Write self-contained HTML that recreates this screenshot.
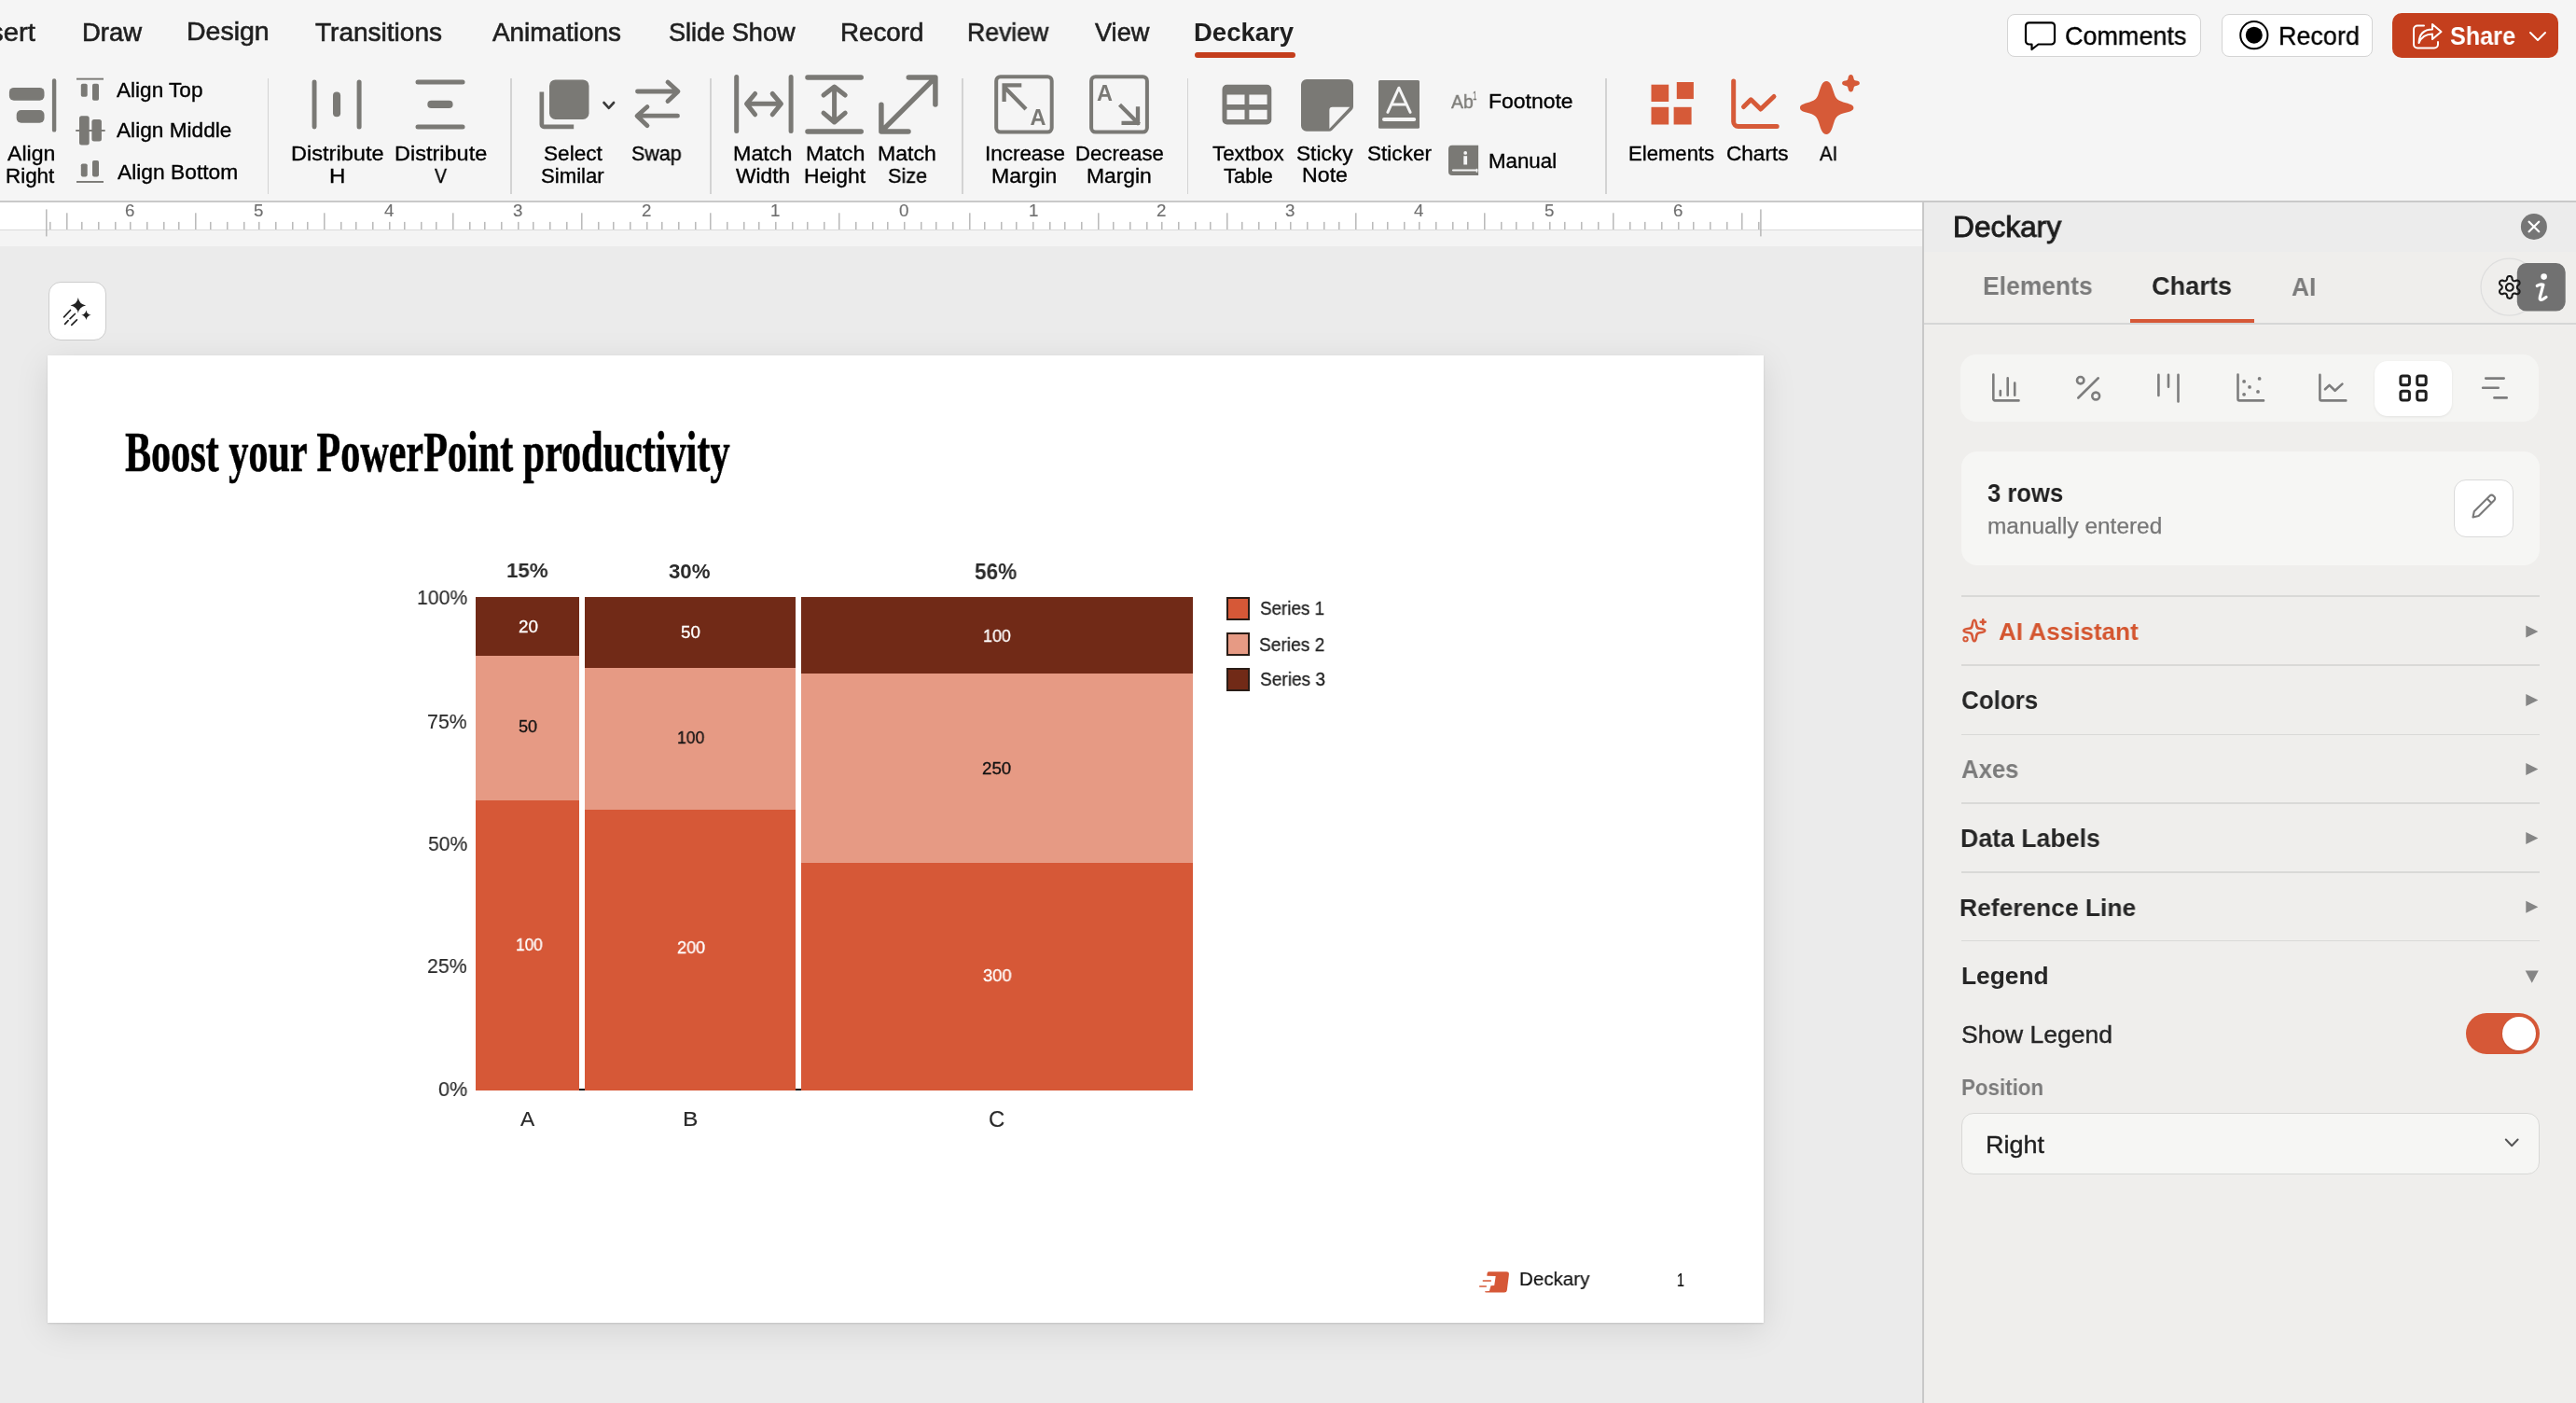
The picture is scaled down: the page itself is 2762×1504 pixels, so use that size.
<!DOCTYPE html>
<html><head><meta charset="utf-8"><style>
html,body{margin:0;padding:0;}
body{width:2762px;height:1504px;position:relative;overflow:hidden;background:#f5f5f5;font-family:"Liberation Sans",sans-serif;}
.r{position:absolute;}
.t{position:absolute;line-height:1;white-space:pre;transform-origin:0 0;will-change:transform;}
.s{position:absolute;overflow:visible;}
</style></head><body>
<div class="r" style="left:0px;top:0px;width:2762px;height:215px;background:#f5f5f5;"></div>
<div class="r" style="left:0px;top:215px;width:2762px;height:1.5px;background:#c9c9c9;"></div>
<div class="r" style="left:0px;top:216.5px;width:2061px;height:48px;background:#f4f4f4;"></div>
<div class="r" style="left:0px;top:216.5px;width:2061px;height:30px;background:#ffffff;"></div>
<div class="r" style="left:0px;top:246px;width:2061px;height:1.3px;background:#dadada;"></div>
<div class="r" style="left:0px;top:264px;width:2061px;height:1240px;background:#ebebeb;"></div>
<div class="r" style="left:2061px;top:216.5px;width:701px;height:1287.5px;background:#efeeec;"></div>
<div class="r" style="left:2061px;top:216.5px;width:1.6px;height:1287.5px;background:#c8c8c8;"></div>
<div class="t" style="left:87.73px;top:22.04px;font-size:26.91px;font-family:'Liberation Sans',sans-serif;font-weight:400;color:#1f1f1f;transform:scaleX(1.0218);-webkit-text-stroke:0.6px #1f1f1f;">Draw</div>
<div class="t" style="left:199.85px;top:21.21px;font-size:26.91px;font-family:'Liberation Sans',sans-serif;font-weight:400;color:#1f1f1f;transform:scaleX(1.0591);-webkit-text-stroke:0.6px #1f1f1f;">Design</div>
<div class="t" style="left:338.35px;top:22.03px;font-size:26.91px;font-family:'Liberation Sans',sans-serif;font-weight:400;color:#1f1f1f;transform:scaleX(1.0416);-webkit-text-stroke:0.6px #1f1f1f;">Transitions</div>
<div class="t" style="left:528.49px;top:22.03px;font-size:26.91px;font-family:'Liberation Sans',sans-serif;font-weight:400;color:#1f1f1f;transform:scaleX(1.0369);-webkit-text-stroke:0.6px #1f1f1f;">Animations</div>
<div class="t" style="left:717.30px;top:22.03px;font-size:26.91px;font-family:'Liberation Sans',sans-serif;font-weight:400;color:#1f1f1f;transform:scaleX(1.0070);-webkit-text-stroke:0.6px #1f1f1f;">Slide Show</div>
<div class="t" style="left:901.13px;top:22.03px;font-size:26.91px;font-family:'Liberation Sans',sans-serif;font-weight:400;color:#1f1f1f;transform:scaleX(1.0312);-webkit-text-stroke:0.6px #1f1f1f;">Record</div>
<div class="t" style="left:1036.86px;top:22.03px;font-size:26.91px;font-family:'Liberation Sans',sans-serif;font-weight:400;color:#1f1f1f;transform:scaleX(0.9894);-webkit-text-stroke:0.6px #1f1f1f;">Review</div>
<div class="t" style="left:1173.92px;top:22.03px;font-size:26.91px;font-family:'Liberation Sans',sans-serif;font-weight:400;color:#1f1f1f;transform:scaleX(1.0089);-webkit-text-stroke:0.6px #1f1f1f;">View</div>
<div class="t" style="left:-10.81px;top:20.56px;font-size:27.93px;font-family:'Liberation Sans',sans-serif;font-weight:400;color:#1f1f1f;transform:scaleX(1.0528);-webkit-text-stroke:0.6px #1f1f1f;">sert</div>
<div class="t" style="left:1280.36px;top:20.78px;font-size:27.20px;font-family:'Liberation Sans',sans-serif;font-weight:700;color:#1f1f1f;transform:scaleX(1.0122);">Deckary</div>
<div class="r" style="left:1281px;top:55.8px;width:108px;height:6px;background:#c43e1c;border-radius:3px;"></div>
<div class="r" style="left:2151.6px;top:14.6px;width:208.5px;height:46.5px;background:#ffffff;border:1.5px solid #d4d4d4;border-radius:8px;box-sizing:border-box;"></div>
<svg class="s" style="left:2168px;top:21px" width="40" height="36" viewBox="0 0 40 36"><path d="M7.5 3.3 H31.5 a3.5 3.5 0 0 1 3.5 3.5 V23 a3.5 3.5 0 0 1 -3.5 3.5 H17.5 L10.5 32 V26.5 H7.5 a3.5 3.5 0 0 1 -3.5 -3.5 V6.8 a3.5 3.5 0 0 1 3.5 -3.5 Z" fill="none" stroke="#000" stroke-width="2.2" stroke-linejoin="round"/></svg>
<div class="t" style="left:2213.71px;top:26.16px;font-size:27.05px;font-family:'Liberation Sans',sans-serif;font-weight:400;color:#000;transform:scaleX(0.9968);-webkit-text-stroke:0.35px #000;">Comments</div>
<div class="r" style="left:2382.2px;top:14.5px;width:162px;height:46.4px;background:#ffffff;border:1.5px solid #d4d4d4;border-radius:8px;box-sizing:border-box;"></div>
<svg class="s" style="left:2396px;top:17px" width="42" height="42" viewBox="0 0 42 42"><circle cx="20.8" cy="20.7" r="14.6" fill="none" stroke="#000" stroke-width="2"/><circle cx="20.8" cy="20.7" r="9" fill="#000"/></svg>
<div class="t" style="left:2442.90px;top:26.35px;font-size:27.05px;font-family:'Liberation Sans',sans-serif;font-weight:400;color:#000;transform:scaleX(0.9957);-webkit-text-stroke:0.35px #000;">Record</div>
<div class="r" style="left:2565.1px;top:13.7px;width:177.8px;height:47.9px;background:#c43f1d;border-radius:10px;"></div>
<svg class="s" style="left:2582px;top:17px" width="42" height="40" viewBox="0 0 42 40"><path d="M17 10.5 H10 a4 4 0 0 0 -4 4 V30.5 a4 4 0 0 0 4 4 H28 a4 4 0 0 0 4 -4 V28" fill="none" stroke="#fff" stroke-width="2" stroke-linecap="round"/><path d="M11.5 29 C12 19 17.5 14.5 26 14.5 V9 L35.5 17 L26 25 V19.5 C19.5 19.5 14.5 22 11.5 29 Z" fill="none" stroke="#fff" stroke-width="2" stroke-linejoin="round"/></svg>
<div class="t" style="left:2626.92px;top:26.35px;font-size:27.05px;font-family:'Liberation Sans',sans-serif;font-weight:700;color:#fff;transform:scaleX(0.9312);">Share</div>
<svg class="s" style="left:2710px;top:32px" width="22" height="16" viewBox="0 0 22 16"><path d="M3 3 L11 11 L19 3" fill="none" stroke="#fff" stroke-width="2" stroke-linecap="round" stroke-linejoin="round"/></svg>
<div class="t" style="left:8.04px;top:154.01px;font-size:22.11px;font-family:'Liberation Sans',sans-serif;font-weight:400;color:#000;transform:scaleX(1.0431);-webkit-text-stroke:0.35px #000;">Align</div>
<div class="t" style="left:6.17px;top:177.67px;font-size:22.11px;font-family:'Liberation Sans',sans-serif;font-weight:400;color:#000;transform:scaleX(1.0134);-webkit-text-stroke:0.35px #000;">Right</div>
<div class="t" style="left:312.04px;top:153.98px;font-size:22.11px;font-family:'Liberation Sans',sans-serif;font-weight:400;color:#000;transform:scaleX(1.0663);-webkit-text-stroke:0.35px #000;">Distribute</div>
<div class="t" style="left:352.98px;top:177.96px;font-size:22.11px;font-family:'Liberation Sans',sans-serif;font-weight:400;color:#000;transform:scaleX(1.0871);-webkit-text-stroke:0.35px #000;">H</div>
<div class="t" style="left:423.08px;top:153.98px;font-size:22.11px;font-family:'Liberation Sans',sans-serif;font-weight:400;color:#000;transform:scaleX(1.0630);-webkit-text-stroke:0.35px #000;">Distribute</div>
<div class="t" style="left:466.22px;top:177.96px;font-size:22.11px;font-family:'Liberation Sans',sans-serif;font-weight:400;color:#000;transform:scaleX(0.8805);-webkit-text-stroke:0.35px #000;">V</div>
<div class="t" style="left:582.74px;top:153.98px;font-size:22.11px;font-family:'Liberation Sans',sans-serif;font-weight:400;color:#000;transform:scaleX(1.0232);-webkit-text-stroke:0.35px #000;">Select</div>
<div class="t" style="left:580.28px;top:177.64px;font-size:22.11px;font-family:'Liberation Sans',sans-serif;font-weight:400;color:#000;transform:scaleX(1.0028);-webkit-text-stroke:0.35px #000;">Similar</div>
<div class="t" style="left:677.13px;top:153.54px;font-size:22.11px;font-family:'Liberation Sans',sans-serif;font-weight:400;color:#000;transform:scaleX(0.9702);-webkit-text-stroke:0.35px #000;">Swap</div>
<div class="t" style="left:786.08px;top:153.98px;font-size:22.11px;font-family:'Liberation Sans',sans-serif;font-weight:400;color:#000;transform:scaleX(1.0539);-webkit-text-stroke:0.35px #000;">Match</div>
<div class="t" style="left:789.41px;top:177.64px;font-size:22.11px;font-family:'Liberation Sans',sans-serif;font-weight:400;color:#000;transform:scaleX(1.0284);-webkit-text-stroke:0.35px #000;">Width</div>
<div class="t" style="left:864.08px;top:153.98px;font-size:22.11px;font-family:'Liberation Sans',sans-serif;font-weight:400;color:#000;transform:scaleX(1.0539);-webkit-text-stroke:0.35px #000;">Match</div>
<div class="t" style="left:862.45px;top:177.67px;font-size:22.11px;font-family:'Liberation Sans',sans-serif;font-weight:400;color:#000;transform:scaleX(1.0354);-webkit-text-stroke:0.35px #000;">Height</div>
<div class="t" style="left:941.28px;top:153.98px;font-size:22.11px;font-family:'Liberation Sans',sans-serif;font-weight:400;color:#000;transform:scaleX(1.0434);-webkit-text-stroke:0.35px #000;">Match</div>
<div class="t" style="left:951.59px;top:177.64px;font-size:22.11px;font-family:'Liberation Sans',sans-serif;font-weight:400;color:#000;transform:scaleX(0.9789);-webkit-text-stroke:0.35px #000;">Size</div>
<div class="t" style="left:1055.61px;top:153.77px;font-size:22.11px;font-family:'Liberation Sans',sans-serif;font-weight:400;color:#000;transform:scaleX(1.0146);-webkit-text-stroke:0.35px #000;">Increase</div>
<div class="t" style="left:1063.10px;top:177.67px;font-size:22.11px;font-family:'Liberation Sans',sans-serif;font-weight:400;color:#000;transform:scaleX(1.0423);-webkit-text-stroke:0.35px #000;">Margin</div>
<div class="t" style="left:1153.39px;top:153.77px;font-size:22.11px;font-family:'Liberation Sans',sans-serif;font-weight:400;color:#000;transform:scaleX(1.0021);-webkit-text-stroke:0.35px #000;">Decrease</div>
<div class="t" style="left:1165.30px;top:177.67px;font-size:22.11px;font-family:'Liberation Sans',sans-serif;font-weight:400;color:#000;transform:scaleX(1.0329);-webkit-text-stroke:0.35px #000;">Margin</div>
<div class="t" style="left:1299.50px;top:153.98px;font-size:22.11px;font-family:'Liberation Sans',sans-serif;font-weight:400;color:#000;transform:scaleX(1.0073);-webkit-text-stroke:0.35px #000;">Textbox</div>
<div class="t" style="left:1312.14px;top:177.64px;font-size:22.11px;font-family:'Liberation Sans',sans-serif;font-weight:400;color:#000;-webkit-text-stroke:0.35px #000;">Table</div>
<div class="t" style="left:1389.94px;top:154.01px;font-size:22.11px;font-family:'Liberation Sans',sans-serif;font-weight:400;color:#000;transform:scaleX(1.0254);-webkit-text-stroke:0.35px #000;">Sticky</div>
<div class="t" style="left:1395.53px;top:177.43px;font-size:22.11px;font-family:'Liberation Sans',sans-serif;font-weight:400;color:#000;transform:scaleX(1.0482);-webkit-text-stroke:0.35px #000;">Note</div>
<div class="t" style="left:1465.96px;top:153.98px;font-size:22.11px;font-family:'Liberation Sans',sans-serif;font-weight:400;color:#000;transform:scaleX(1.0209);-webkit-text-stroke:0.35px #000;">Sticker</div>
<div class="t" style="left:1745.89px;top:153.98px;font-size:22.11px;font-family:'Liberation Sans',sans-serif;font-weight:400;color:#000;-webkit-text-stroke:0.35px #000;">Elements</div>
<div class="t" style="left:1851.41px;top:153.98px;font-size:22.11px;font-family:'Liberation Sans',sans-serif;font-weight:400;color:#000;transform:scaleX(1.0216);-webkit-text-stroke:0.35px #000;">Charts</div>
<div class="t" style="left:1950.81px;top:153.50px;font-size:22.11px;font-family:'Liberation Sans',sans-serif;font-weight:400;color:#000;transform:scaleX(0.9259);-webkit-text-stroke:0.35px #000;">AI</div>
<div class="t" style="left:125.24px;top:85.93px;font-size:22.40px;font-family:'Liberation Sans',sans-serif;font-weight:400;color:#000;transform:scaleX(1.0080);-webkit-text-stroke:0.35px #000;">Align Top</div>
<div class="t" style="left:125.24px;top:129.25px;font-size:22.40px;font-family:'Liberation Sans',sans-serif;font-weight:400;color:#000;transform:scaleX(1.0123);-webkit-text-stroke:0.35px #000;">Align Middle</div>
<div class="t" style="left:125.60px;top:173.71px;font-size:22.40px;font-family:'Liberation Sans',sans-serif;font-weight:400;color:#000;transform:scaleX(1.0184);-webkit-text-stroke:0.35px #000;">Align Bottom</div>
<div class="t" style="left:1595.53px;top:98.13px;font-size:21.82px;font-family:'Liberation Sans',sans-serif;font-weight:400;color:#000;transform:scaleX(1.0528);-webkit-text-stroke:0.35px #000;">Footnote</div>
<div class="t" style="left:1595.58px;top:162.13px;font-size:21.82px;font-family:'Liberation Sans',sans-serif;font-weight:400;color:#000;transform:scaleX(1.0221);-webkit-text-stroke:0.35px #000;">Manual</div>
<div class="t" style="left:1555.95px;top:97.71px;font-size:21.09px;font-family:'Liberation Sans',sans-serif;font-weight:400;color:#7a7975;transform:scaleX(0.9242);-webkit-text-stroke:0.35px #7a7975;">Ab</div>
<div class="t" style="left:1578.75px;top:96.31px;font-size:13.67px;font-family:'Liberation Sans',sans-serif;font-weight:400;color:#7a7975;transform:scaleX(0.5919);-webkit-text-stroke:0.35px #7a7975;">1</div>
<div class="r" style="left:286.85px;top:84px;width:1.5px;height:123.5px;background:#d3d3d3;"></div>
<div class="r" style="left:547.25px;top:84px;width:1.5px;height:123.5px;background:#d3d3d3;"></div>
<div class="r" style="left:761.25px;top:84px;width:1.5px;height:123.5px;background:#d3d3d3;"></div>
<div class="r" style="left:1031.25px;top:84px;width:1.5px;height:123.5px;background:#d3d3d3;"></div>
<div class="r" style="left:1272.75px;top:84px;width:1.5px;height:123.5px;background:#d3d3d3;"></div>
<div class="r" style="left:1721.05px;top:84px;width:1.5px;height:123.5px;background:#d3d3d3;"></div>
<svg class="s" style="left:0;top:0" width="2762" height="215" viewBox="0 0 2762 215"><rect x="9.9" y="93.9" width="37.6" height="13.9" rx="5" fill="#7a7975"/><rect x="17.7" y="118" width="29.8" height="13.7" rx="5" fill="#7a7975"/><rect x="55.9" y="84.2" width="4.4" height="57.4" rx="2.2" fill="#7a7975"/><rect x="82" y="83.7" width="29" height="1.9" fill="#7a7975"/><rect x="86.8" y="89.8" width="6.9" height="14" rx="1.8" fill="#7a7975"/><rect x="99" y="89.8" width="7" height="18" rx="1.8" fill="#7a7975"/><rect x="81.2" y="139" width="31.5" height="1.9" fill="#7a7975"/><rect x="85" y="124.2" width="10.7" height="31.4" rx="2.5" fill="#7a7975"/><rect x="98.4" y="128" width="10.5" height="23.5" rx="2.5" fill="#7a7975"/><rect x="86.8" y="175.4" width="6.9" height="14" rx="1.8" fill="#7a7975"/><rect x="99" y="171.9" width="7" height="17.5" rx="1.8" fill="#7a7975"/><rect x="82" y="194" width="29" height="1.9" fill="#7a7975"/><rect x="334.6" y="85.4" width="4.9" height="53.1" rx="2.45" fill="#7a7975"/><rect x="357" y="98.5" width="8.1" height="26.8" rx="4" fill="#7a7975"/><rect x="382.6" y="85.4" width="5" height="53.1" rx="2.5" fill="#7a7975"/><rect x="445.5" y="85.4" width="53" height="5" rx="2.5" fill="#7a7975"/><rect x="458.3" y="107.8" width="27.3" height="8.2" rx="4.1" fill="#7a7975"/><rect x="445.5" y="133.5" width="53" height="5" rx="2.5" fill="#7a7975"/><rect x="589" y="85.4" width="42.5" height="42.5" rx="6.5" fill="#7a7975"/><path d="M580.85 98.5 V133.5 a2.3 2.3 0 0 0 2.3 2.3 H615.2" fill="none" stroke="#7a7975" stroke-width="4.7"/><path d="M647.5 110 L652.8 115.8 L658.1 110" fill="none" stroke="#3a3a3a" stroke-width="2.6" stroke-linecap="round" stroke-linejoin="round"/><path d="M683.5 98 H726.5 M716 88 L727 98 L716 108.5" fill="none" stroke="#7a7975" stroke-width="4.8" stroke-linecap="round" stroke-linejoin="round"/><path d="M726.5 124.2 H683.5 M694 114.5 L683 124.2 L694 134.7" fill="none" stroke="#7a7975" stroke-width="4.8" stroke-linecap="round" stroke-linejoin="round"/><path d="M789.7 82.6 V140.4 M848.1 82.6 V140.4" fill="none" stroke="#7a7975" stroke-width="5" stroke-linecap="round" stroke-linejoin="round"/><path d="M801 111.3 H837 M809.6 100.5 L800.5 111.3 L809.6 122.8 M828.2 100.5 L837.5 111.3 L828.2 122.8" fill="none" stroke="#7a7975" stroke-width="5" stroke-linecap="round" stroke-linejoin="round"/><path d="M866 83 H923.2 M866 141 H923.2" fill="none" stroke="#7a7975" stroke-width="5.5" stroke-linecap="round" stroke-linejoin="round"/><path d="M894.6 94 V130 M883 102 L894.6 93 L906.2 102 M883 121.2 L894.6 131 L906.2 121.2" fill="none" stroke="#7a7975" stroke-width="5" stroke-linecap="round" stroke-linejoin="round"/><path d="M944.9 112.2 V141 H974 M974.3 83 H1002.9 V112 M947.5 138.4 L1000.3 85.6" fill="none" stroke="#7a7975" stroke-width="5.5" stroke-linecap="round" stroke-linejoin="round"/><rect x="1068.2" y="82.2" width="59.5" height="59.4" rx="4.5" fill="none" stroke="#7a7975" stroke-width="4"/><path d="M1100 117 L1077 93.5 M1076.6 109 V91.4 H1095.3" fill="none" stroke="#7a7975" stroke-width="4.3"/><text x="1113" y="133.8" font-family="Liberation Sans" font-weight="700" font-size="23.5" fill="#7a7975" text-anchor="middle" transform="translate(1113 0) scale(1 1) translate(-1113 0)">A</text><rect x="1170.1" y="82.2" width="59.8" height="59.4" rx="4.5" fill="none" stroke="#7a7975" stroke-width="4"/><text x="1184.5" y="107.8" font-family="Liberation Sans" font-weight="700" font-size="23.5" fill="#7a7975" text-anchor="middle">A</text><path d="M1200.5 112.3 L1221.5 133.3 M1202.5 131.8 H1220 V114.3" fill="none" stroke="#7a7975" stroke-width="4.3"/><path fill-rule="evenodd" fill="#7a7975" d="M1315.5 90.7 H1358.3 a5 5 0 0 1 5 5 V128.5 a5 5 0 0 1 -5 5 H1315.5 a5 5 0 0 1 -5 -5 V95.7 a5 5 0 0 1 5 -5 Z M1315.5 101.4 V111.9 H1334.5 V101.4 Z M1339.4 101.4 V111.9 H1358.6 V101.4 Z M1315.5 117.7 V127.9 H1334.5 V117.7 Z M1339.4 117.7 V127.9 H1358.6 V117.7 Z"/><path fill="#7a7975" d="M1401 85.1 H1445 a6 6 0 0 1 6 6 V114.3 Q1451 116.4 1449.4 118 L1428.3 139.4 Q1427 140.7 1425 140.7 H1401 a6 6 0 0 1 -6 -6 V91.1 a6 6 0 0 1 6 -6 Z"/><path fill="#f5f5f5" d="M1428.6 114.8 H1447.3 L1425.4 137.9 V118 Q1425.4 114.8 1428.6 114.8 Z"/><rect x="1478" y="86" width="44" height="51.8" rx="1.5" fill="#7a7975"/><path d="M1487.9 120.3 L1499.9 94.2 L1512.1 120.3 M1492.6 112 H1507.4" fill="none" stroke="#f5f5f5" stroke-width="3" stroke-linecap="round" stroke-linejoin="round"/><rect x="1482" y="125.9" width="36.2" height="4" rx="2" fill="#f5f5f5"/><path fill="#7a7975" d="M1557 155.8 H1585.1 V188 H1557 a4 4 0 0 1 -4 -4 V159.8 a4 4 0 0 1 4 -4 Z"/><path d="M1558 182.5 H1583.5" fill="none" stroke="#f5f5f5" stroke-width="2.2" stroke-linecap="round"/><path d="M1583.5 180.8 V184.8" fill="none" stroke="#f5f5f5" stroke-width="1.5"/><circle cx="1571.2" cy="163.9" r="1.9" fill="#f5f5f5"/><rect x="1569.3" y="167.2" width="3.8" height="9.3" fill="#f5f5f5"/><rect x="1770.5" y="90.7" width="18.7" height="18.3" fill="#d65a38"/><rect x="1797.8" y="88" width="18.1" height="18.1" fill="#d65a38"/><rect x="1770.5" y="114.8" width="18.7" height="18.7" fill="#d65a38"/><rect x="1794.6" y="114.8" width="19" height="18.7" fill="#d65a38"/><path d="M1858.7 87 V130.5 a5 5 0 0 0 5 5 H1905.2" fill="none" stroke="#d65a38" stroke-width="5" stroke-linecap="round"/><path d="M1869.5 114.5 L1877.3 106.8 L1887.8 117 L1902 103.5" fill="none" stroke="#d65a38" stroke-width="5" stroke-linecap="round" stroke-linejoin="round"/><path fill="#d65a38" d="M1958.3 86.9 C1962.5 86.9 1964 92 1966.5 100 C1968.5 106.5 1971 108 1979 110.2 C1985 111.8 1987.4 113 1987.4 115.4 C1987.4 118 1985 119.2 1979 120.8 C1971 123 1968.5 124.5 1966.5 131 C1964 139 1962.5 144 1958.3 144 C1954 144 1952.5 139 1950 131 C1948 124.5 1945.5 123 1937.5 120.8 C1932 119.2 1930 118 1930 115.4 C1930 113 1932 111.8 1937.5 110.2 C1945.5 108 1948 106.5 1950 100 C1952.5 92 1954 86.9 1958.3 86.9 Z"/><path fill="#d65a38" d="M1984.5 80 C1986.3 80 1987 81.3 1987.4 83.5 C1987.7 85.5 1988.3 86.2 1990.3 86.5 C1992.5 86.9 1993.9 87.5 1993.9 89.2 C1993.9 90.9 1992.5 91.5 1990.3 91.9 C1988.3 92.2 1987.7 92.9 1987.4 94.9 C1987 97.1 1986.3 98.4 1984.5 98.4 C1982.7 98.4 1982 97.1 1981.6 94.9 C1981.3 92.9 1980.7 92.2 1978.7 91.9 C1976.5 91.5 1975.1 90.9 1975.1 89.2 C1975.1 87.5 1976.5 86.9 1978.7 86.5 C1980.7 86.2 1981.3 85.5 1981.6 83.5 C1982 81.3 1982.7 80 1984.5 80 Z"/></svg>
<svg class="s" style="left:0;top:0" width="2061" height="264" viewBox="0 0 2061 264"><rect x="53.10" y="237.9" width="1.4" height="8.1" fill="#b4b4b4"/><rect x="71.10" y="228.3" width="1.4" height="17.7" fill="#b4b4b4"/><rect x="87.10" y="237.9" width="1.4" height="8.1" fill="#b4b4b4"/><rect x="105.10" y="237.9" width="1.4" height="8.1" fill="#b4b4b4"/><rect x="123.10" y="237.9" width="1.4" height="8.1" fill="#b4b4b4"/><rect x="139.10" y="237.9" width="1.4" height="8.1" fill="#b4b4b4"/><rect x="157.10" y="237.9" width="1.4" height="8.1" fill="#b4b4b4"/><rect x="175.10" y="237.9" width="1.4" height="8.1" fill="#b4b4b4"/><rect x="191.10" y="237.9" width="1.4" height="8.1" fill="#b4b4b4"/><rect x="209.10" y="228.3" width="1.4" height="17.7" fill="#b4b4b4"/><rect x="225.10" y="237.9" width="1.4" height="8.1" fill="#b4b4b4"/><rect x="243.10" y="237.9" width="1.4" height="8.1" fill="#b4b4b4"/><rect x="261.10" y="237.9" width="1.4" height="8.1" fill="#b4b4b4"/><rect x="277.10" y="237.9" width="1.4" height="8.1" fill="#b4b4b4"/><rect x="295.10" y="237.9" width="1.4" height="8.1" fill="#b4b4b4"/><rect x="313.10" y="237.9" width="1.4" height="8.1" fill="#b4b4b4"/><rect x="329.10" y="237.9" width="1.4" height="8.1" fill="#b4b4b4"/><rect x="347.10" y="228.3" width="1.4" height="17.7" fill="#b4b4b4"/><rect x="365.10" y="237.9" width="1.4" height="8.1" fill="#b4b4b4"/><rect x="381.10" y="237.9" width="1.4" height="8.1" fill="#b4b4b4"/><rect x="399.10" y="237.9" width="1.4" height="8.1" fill="#b4b4b4"/><rect x="417.10" y="237.9" width="1.4" height="8.1" fill="#b4b4b4"/><rect x="433.10" y="237.9" width="1.4" height="8.1" fill="#b4b4b4"/><rect x="451.10" y="237.9" width="1.4" height="8.1" fill="#b4b4b4"/><rect x="467.10" y="237.9" width="1.4" height="8.1" fill="#b4b4b4"/><rect x="485.10" y="228.3" width="1.4" height="17.7" fill="#b4b4b4"/><rect x="503.10" y="237.9" width="1.4" height="8.1" fill="#b4b4b4"/><rect x="519.10" y="237.9" width="1.4" height="8.1" fill="#b4b4b4"/><rect x="537.10" y="237.9" width="1.4" height="8.1" fill="#b4b4b4"/><rect x="555.10" y="237.9" width="1.4" height="8.1" fill="#b4b4b4"/><rect x="571.10" y="237.9" width="1.4" height="8.1" fill="#b4b4b4"/><rect x="589.10" y="237.9" width="1.4" height="8.1" fill="#b4b4b4"/><rect x="607.10" y="237.9" width="1.4" height="8.1" fill="#b4b4b4"/><rect x="623.10" y="228.3" width="1.4" height="17.7" fill="#b4b4b4"/><rect x="641.10" y="237.9" width="1.4" height="8.1" fill="#b4b4b4"/><rect x="657.10" y="237.9" width="1.4" height="8.1" fill="#b4b4b4"/><rect x="675.10" y="237.9" width="1.4" height="8.1" fill="#b4b4b4"/><rect x="693.10" y="237.9" width="1.4" height="8.1" fill="#b4b4b4"/><rect x="709.10" y="237.9" width="1.4" height="8.1" fill="#b4b4b4"/><rect x="727.10" y="237.9" width="1.4" height="8.1" fill="#b4b4b4"/><rect x="745.10" y="237.9" width="1.4" height="8.1" fill="#b4b4b4"/><rect x="761.10" y="228.3" width="1.4" height="17.7" fill="#b4b4b4"/><rect x="779.10" y="237.9" width="1.4" height="8.1" fill="#b4b4b4"/><rect x="797.10" y="237.9" width="1.4" height="8.1" fill="#b4b4b4"/><rect x="813.10" y="237.9" width="1.4" height="8.1" fill="#b4b4b4"/><rect x="831.10" y="237.9" width="1.4" height="8.1" fill="#b4b4b4"/><rect x="849.10" y="237.9" width="1.4" height="8.1" fill="#b4b4b4"/><rect x="865.10" y="237.9" width="1.4" height="8.1" fill="#b4b4b4"/><rect x="883.10" y="237.9" width="1.4" height="8.1" fill="#b4b4b4"/><rect x="899.10" y="228.3" width="1.4" height="17.7" fill="#b4b4b4"/><rect x="917.10" y="237.9" width="1.4" height="8.1" fill="#b4b4b4"/><rect x="935.10" y="237.9" width="1.4" height="8.1" fill="#b4b4b4"/><rect x="951.10" y="237.9" width="1.4" height="8.1" fill="#b4b4b4"/><rect x="969.10" y="237.9" width="1.4" height="8.1" fill="#b4b4b4"/><rect x="987.10" y="237.9" width="1.4" height="8.1" fill="#b4b4b4"/><rect x="1003.10" y="237.9" width="1.4" height="8.1" fill="#b4b4b4"/><rect x="1021.10" y="237.9" width="1.4" height="8.1" fill="#b4b4b4"/><rect x="1039.10" y="228.3" width="1.4" height="17.7" fill="#b4b4b4"/><rect x="1055.10" y="237.9" width="1.4" height="8.1" fill="#b4b4b4"/><rect x="1073.10" y="237.9" width="1.4" height="8.1" fill="#b4b4b4"/><rect x="1089.10" y="237.9" width="1.4" height="8.1" fill="#b4b4b4"/><rect x="1107.10" y="237.9" width="1.4" height="8.1" fill="#b4b4b4"/><rect x="1125.10" y="237.9" width="1.4" height="8.1" fill="#b4b4b4"/><rect x="1141.10" y="237.9" width="1.4" height="8.1" fill="#b4b4b4"/><rect x="1159.10" y="237.9" width="1.4" height="8.1" fill="#b4b4b4"/><rect x="1177.10" y="228.3" width="1.4" height="17.7" fill="#b4b4b4"/><rect x="1193.10" y="237.9" width="1.4" height="8.1" fill="#b4b4b4"/><rect x="1211.10" y="237.9" width="1.4" height="8.1" fill="#b4b4b4"/><rect x="1229.10" y="237.9" width="1.4" height="8.1" fill="#b4b4b4"/><rect x="1245.10" y="237.9" width="1.4" height="8.1" fill="#b4b4b4"/><rect x="1263.10" y="237.9" width="1.4" height="8.1" fill="#b4b4b4"/><rect x="1281.10" y="237.9" width="1.4" height="8.1" fill="#b4b4b4"/><rect x="1297.10" y="237.9" width="1.4" height="8.1" fill="#b4b4b4"/><rect x="1315.10" y="228.3" width="1.4" height="17.7" fill="#b4b4b4"/><rect x="1331.10" y="237.9" width="1.4" height="8.1" fill="#b4b4b4"/><rect x="1349.10" y="237.9" width="1.4" height="8.1" fill="#b4b4b4"/><rect x="1367.10" y="237.9" width="1.4" height="8.1" fill="#b4b4b4"/><rect x="1383.10" y="237.9" width="1.4" height="8.1" fill="#b4b4b4"/><rect x="1401.10" y="237.9" width="1.4" height="8.1" fill="#b4b4b4"/><rect x="1419.10" y="237.9" width="1.4" height="8.1" fill="#b4b4b4"/><rect x="1435.10" y="237.9" width="1.4" height="8.1" fill="#b4b4b4"/><rect x="1453.10" y="228.3" width="1.4" height="17.7" fill="#b4b4b4"/><rect x="1471.10" y="237.9" width="1.4" height="8.1" fill="#b4b4b4"/><rect x="1487.10" y="237.9" width="1.4" height="8.1" fill="#b4b4b4"/><rect x="1505.10" y="237.9" width="1.4" height="8.1" fill="#b4b4b4"/><rect x="1521.10" y="237.9" width="1.4" height="8.1" fill="#b4b4b4"/><rect x="1539.10" y="237.9" width="1.4" height="8.1" fill="#b4b4b4"/><rect x="1557.10" y="237.9" width="1.4" height="8.1" fill="#b4b4b4"/><rect x="1573.10" y="237.9" width="1.4" height="8.1" fill="#b4b4b4"/><rect x="1591.10" y="228.3" width="1.4" height="17.7" fill="#b4b4b4"/><rect x="1609.10" y="237.9" width="1.4" height="8.1" fill="#b4b4b4"/><rect x="1625.10" y="237.9" width="1.4" height="8.1" fill="#b4b4b4"/><rect x="1643.10" y="237.9" width="1.4" height="8.1" fill="#b4b4b4"/><rect x="1661.10" y="237.9" width="1.4" height="8.1" fill="#b4b4b4"/><rect x="1677.10" y="237.9" width="1.4" height="8.1" fill="#b4b4b4"/><rect x="1695.10" y="237.9" width="1.4" height="8.1" fill="#b4b4b4"/><rect x="1713.10" y="237.9" width="1.4" height="8.1" fill="#b4b4b4"/><rect x="1729.10" y="228.3" width="1.4" height="17.7" fill="#b4b4b4"/><rect x="1747.10" y="237.9" width="1.4" height="8.1" fill="#b4b4b4"/><rect x="1763.10" y="237.9" width="1.4" height="8.1" fill="#b4b4b4"/><rect x="1781.10" y="237.9" width="1.4" height="8.1" fill="#b4b4b4"/><rect x="1799.10" y="237.9" width="1.4" height="8.1" fill="#b4b4b4"/><rect x="1815.10" y="237.9" width="1.4" height="8.1" fill="#b4b4b4"/><rect x="1833.10" y="237.9" width="1.4" height="8.1" fill="#b4b4b4"/><rect x="1851.10" y="237.9" width="1.4" height="8.1" fill="#b4b4b4"/><rect x="1867.10" y="228.3" width="1.4" height="17.7" fill="#b4b4b4"/><rect x="1885.10" y="237.9" width="1.4" height="8.1" fill="#b4b4b4"/><rect x="49.10" y="224.4" width="1.4" height="29" fill="#b4b4b4"/><rect x="1887.20" y="224.4" width="1.4" height="29" fill="#b4b4b4"/></svg>
<div class="t" style="left:134.44px;top:216.92px;font-size:18.76px;font-family:'Liberation Sans',sans-serif;font-weight:400;color:#6f6f6f;-webkit-text-stroke:0.15px #6f6f6f;">6</div>
<div class="t" style="left:272.03px;top:217.39px;font-size:18.76px;font-family:'Liberation Sans',sans-serif;font-weight:400;color:#6f6f6f;-webkit-text-stroke:0.15px #6f6f6f;">5</div>
<div class="t" style="left:412.48px;top:217.32px;font-size:18.76px;font-family:'Liberation Sans',sans-serif;font-weight:400;color:#6f6f6f;-webkit-text-stroke:0.15px #6f6f6f;">4</div>
<div class="t" style="left:550.08px;top:217.32px;font-size:18.76px;font-family:'Liberation Sans',sans-serif;font-weight:400;color:#6f6f6f;-webkit-text-stroke:0.15px #6f6f6f;">3</div>
<div class="t" style="left:688.03px;top:217.24px;font-size:18.76px;font-family:'Liberation Sans',sans-serif;font-weight:400;color:#6f6f6f;-webkit-text-stroke:0.15px #6f6f6f;">2</div>
<div class="t" style="left:826.26px;top:216.92px;font-size:18.76px;font-family:'Liberation Sans',sans-serif;font-weight:400;color:#6f6f6f;-webkit-text-stroke:0.15px #6f6f6f;">1</div>
<div class="t" style="left:964.01px;top:217.32px;font-size:18.76px;font-family:'Liberation Sans',sans-serif;font-weight:400;color:#6f6f6f;-webkit-text-stroke:0.15px #6f6f6f;">0</div>
<div class="t" style="left:1102.58px;top:217.32px;font-size:18.76px;font-family:'Liberation Sans',sans-serif;font-weight:400;color:#6f6f6f;-webkit-text-stroke:0.15px #6f6f6f;">1</div>
<div class="t" style="left:1240.03px;top:217.24px;font-size:18.76px;font-family:'Liberation Sans',sans-serif;font-weight:400;color:#6f6f6f;-webkit-text-stroke:0.15px #6f6f6f;">2</div>
<div class="t" style="left:1378.08px;top:217.32px;font-size:18.76px;font-family:'Liberation Sans',sans-serif;font-weight:400;color:#6f6f6f;-webkit-text-stroke:0.15px #6f6f6f;">3</div>
<div class="t" style="left:1516.48px;top:217.32px;font-size:18.76px;font-family:'Liberation Sans',sans-serif;font-weight:400;color:#6f6f6f;-webkit-text-stroke:0.15px #6f6f6f;">4</div>
<div class="t" style="left:1656.03px;top:217.39px;font-size:18.76px;font-family:'Liberation Sans',sans-serif;font-weight:400;color:#6f6f6f;-webkit-text-stroke:0.15px #6f6f6f;">5</div>
<div class="t" style="left:1793.96px;top:217.32px;font-size:18.76px;font-family:'Liberation Sans',sans-serif;font-weight:400;color:#6f6f6f;-webkit-text-stroke:0.15px #6f6f6f;">6</div>
<div class="r" style="left:52px;top:302px;width:62px;height:63px;background:#ffffff;border:1.4px solid #cdcdcd;border-radius:13px;box-sizing:border-box;"></div>
<svg class="s" style="left:52px;top:302px" width="62" height="63" viewBox="52 302 62 63"><path fill="#222" d="M83.8 319.10 Q84.90 326.30 92.10 327.4 Q84.90 328.50 83.8 335.70 Q82.70 328.50 75.50 327.4 Q82.70 326.30 83.8 319.10 Z"/><path fill="#222" d="M92.4 332.40 Q93.15 336.95 97.70 337.7 Q93.15 338.45 92.4 343.00 Q91.65 338.45 87.10 337.7 Q91.65 336.95 92.4 332.40 Z"/><path d="M68.6 339.8 L75.5 332.5 M75.1 341.7 L80.4 336.5 M69.6 347.4 L73.1 343.6 M76.8 348.4 L82.4 342.9" fill="none" stroke="#222" stroke-width="1.7" stroke-linecap="round"/></svg>
<div class="r" style="left:50.5px;top:381px;width:1840.5px;height:1037px;background:#ffffff;box-shadow:0 1px 2px rgba(0,0,0,0.12),0 8px 34px rgba(0,0,0,0.10);"></div>
<div class="t" style="left:133.66px;top:455.32px;font-size:60.46px;font-family:'Liberation Serif',serif;font-weight:700;color:#000;transform:scaleX(0.6975);-webkit-text-stroke:0.6px #000;">Boost your PowerPoint productivity</div>
<div class="r" style="left:510.1px;top:640.1px;width:110.89999999999998px;height:62.60000000000002px;background:#712a17;"></div>
<div class="r" style="left:510.1px;top:702.7px;width:110.89999999999998px;height:155.0999999999999px;background:#e69a84;"></div>
<div class="r" style="left:510.1px;top:857.8px;width:110.89999999999998px;height:311.0px;background:#d65837;"></div>
<div class="r" style="left:627.0px;top:640.1px;width:225.89999999999998px;height:75.69999999999993px;background:#712a17;"></div>
<div class="r" style="left:627.0px;top:715.8px;width:225.89999999999998px;height:152.30000000000007px;background:#e69a84;"></div>
<div class="r" style="left:627.0px;top:868.1px;width:225.89999999999998px;height:300.69999999999993px;background:#d65837;"></div>
<div class="r" style="left:859.1px;top:640.1px;width:419.6px;height:81.69999999999993px;background:#712a17;"></div>
<div class="r" style="left:859.1px;top:721.8px;width:419.6px;height:203.30000000000007px;background:#e69a84;"></div>
<div class="r" style="left:859.1px;top:925.1px;width:419.6px;height:243.69999999999993px;background:#d65837;"></div>
<div class="r" style="left:621px;top:1167.1px;width:6px;height:1.7px;background:#111;"></div>
<div class="r" style="left:852.9px;top:1167.1px;width:6.2px;height:1.7px;background:#111;"></div>
<div class="t" style="left:447.05px;top:629.53px;font-size:21.96px;font-family:'Liberation Sans',sans-serif;font-weight:400;color:#2a2a2a;transform:scaleX(0.9646);-webkit-text-stroke:0.15px #2a2a2a;">100%</div>
<div class="t" style="left:458.42px;top:763.68px;font-size:21.38px;font-family:'Liberation Sans',sans-serif;font-weight:400;color:#2a2a2a;transform:scaleX(0.9953);-webkit-text-stroke:0.15px #2a2a2a;">75%</div>
<div class="t" style="left:458.69px;top:893.41px;font-size:22.69px;font-family:'Liberation Sans',sans-serif;font-weight:400;color:#2a2a2a;transform:scaleX(0.9318);-webkit-text-stroke:0.15px #2a2a2a;">50%</div>
<div class="t" style="left:458.48px;top:1023.85px;font-size:22.84px;font-family:'Liberation Sans',sans-serif;font-weight:400;color:#2a2a2a;transform:scaleX(0.9307);-webkit-text-stroke:0.15px #2a2a2a;">25%</div>
<div class="t" style="left:469.72px;top:1155.97px;font-size:22.84px;font-family:'Liberation Sans',sans-serif;font-weight:400;color:#2a2a2a;transform:scaleX(0.9446);-webkit-text-stroke:0.15px #2a2a2a;">0%</div>
<div class="t" style="left:542.70px;top:600.45px;font-size:22.98px;font-family:'Liberation Sans',sans-serif;font-weight:700;color:#2b2b2b;transform:scaleX(0.9715);">15%</div>
<div class="t" style="left:716.84px;top:602.03px;font-size:22.11px;font-family:'Liberation Sans',sans-serif;font-weight:700;color:#2b2b2b;transform:scaleX(1.0054);">30%</div>
<div class="t" style="left:1045.30px;top:601.94px;font-size:23.27px;font-family:'Liberation Sans',sans-serif;font-weight:700;color:#2b2b2b;transform:scaleX(0.9676);">56%</div>
<div class="t" style="left:555.68px;top:662.94px;font-size:18.62px;font-family:'Liberation Sans',sans-serif;font-weight:400;color:#ffffff;transform:scaleX(1.0138);-webkit-text-stroke:0.3px #ffffff;">20</div>
<div class="t" style="left:556.36px;top:769.87px;font-size:18.18px;font-family:'Liberation Sans',sans-serif;font-weight:400;color:#111111;transform:scaleX(0.9961);-webkit-text-stroke:0.3px #111111;">50</div>
<div class="t" style="left:552.82px;top:1003.82px;font-size:18.76px;font-family:'Liberation Sans',sans-serif;font-weight:400;color:#ffffff;transform:scaleX(0.9219);-webkit-text-stroke:0.3px #ffffff;">100</div>
<div class="t" style="left:730.09px;top:668.92px;font-size:18.76px;font-family:'Liberation Sans',sans-serif;font-weight:400;color:#ffffff;-webkit-text-stroke:0.3px #ffffff;">50</div>
<div class="t" style="left:726.19px;top:782.43px;font-size:18.33px;font-family:'Liberation Sans',sans-serif;font-weight:400;color:#111111;transform:scaleX(0.9544);-webkit-text-stroke:0.3px #111111;">100</div>
<div class="t" style="left:725.51px;top:1007.26px;font-size:18.76px;font-family:'Liberation Sans',sans-serif;font-weight:400;color:#ffffff;transform:scaleX(0.9647);-webkit-text-stroke:0.3px #ffffff;">200</div>
<div class="t" style="left:1054.09px;top:671.97px;font-size:19.20px;font-family:'Liberation Sans',sans-serif;font-weight:400;color:#ffffff;transform:scaleX(0.9345);-webkit-text-stroke:0.3px #ffffff;">100</div>
<div class="t" style="left:1053.04px;top:814.50px;font-size:18.62px;font-family:'Liberation Sans',sans-serif;font-weight:400;color:#111111;transform:scaleX(1.0062);-webkit-text-stroke:0.3px #111111;">250</div>
<div class="t" style="left:1053.77px;top:1036.94px;font-size:18.62px;font-family:'Liberation Sans',sans-serif;font-weight:400;color:#ffffff;transform:scaleX(0.9848);-webkit-text-stroke:0.3px #ffffff;">300</div>
<div class="t" style="left:558.40px;top:1188.77px;font-size:21.82px;font-family:'Liberation Sans',sans-serif;font-weight:400;color:#2a2a2a;transform:scaleX(1.0447);-webkit-text-stroke:0.15px #2a2a2a;">A</div>
<div class="t" style="left:731.65px;top:1188.77px;font-size:21.82px;font-family:'Liberation Sans',sans-serif;font-weight:400;color:#2a2a2a;transform:scaleX(1.1275);-webkit-text-stroke:0.15px #2a2a2a;">B</div>
<div class="t" style="left:1060.37px;top:1189.03px;font-size:23.56px;font-family:'Liberation Sans',sans-serif;font-weight:400;color:#2a2a2a;transform:scaleX(1.0132);-webkit-text-stroke:0.15px #2a2a2a;">C</div>
<div class="r" style="left:1315.2px;top:640.0px;width:24.7px;height:24.8px;background:#d65837;border:2.1px solid #2a1d17;box-sizing:border-box;"></div>
<div class="t" style="left:1350.73px;top:642.81px;font-size:19.93px;font-family:'Liberation Sans',sans-serif;font-weight:400;color:#222222;transform:scaleX(0.9447);-webkit-text-stroke:0.3px #222222;">Series 1</div>
<div class="r" style="left:1315.2px;top:678.1px;width:24.7px;height:24.8px;background:#e69a84;border:2.1px solid #2a1d17;box-sizing:border-box;"></div>
<div class="t" style="left:1350.44px;top:680.54px;font-size:20.22px;font-family:'Liberation Sans',sans-serif;font-weight:400;color:#222222;transform:scaleX(0.9470);-webkit-text-stroke:0.3px #222222;">Series 2</div>
<div class="r" style="left:1315.2px;top:716.2px;width:24.7px;height:24.8px;background:#712a17;border:2.1px solid #2a1d17;box-sizing:border-box;"></div>
<div class="t" style="left:1350.84px;top:718.38px;font-size:20.51px;font-family:'Liberation Sans',sans-serif;font-weight:400;color:#222222;transform:scaleX(0.9316);-webkit-text-stroke:0.3px #222222;">Series 3</div>
<svg class="s" style="left:1580px;top:1355px" width="45" height="37" viewBox="1580 1355 45 37"><path fill="#d65837" d="M1596.2 1363.3 H1615.2 Q1618.3 1363.3 1617.9 1366.4 L1615.8 1383.2 Q1615.5 1385.6 1613 1385.6 H1593.6 Q1591.9 1385.6 1592.1 1384.2 L1596.9 1384.1 L1598.5 1378.2 L1602.2 1378 L1603.7 1367.9 L1594.3 1367.7 L1594.5 1365.3 Q1594.7 1363.3 1596.2 1363.3 Z"/><path d="M1590.3 1372.9 H1598.3 M1586.7 1378.9 H1593.3" fill="none" stroke="#d65837" stroke-width="1.5" stroke-linecap="round"/></svg>
<div class="t" style="left:1628.67px;top:1361.45px;font-size:20.65px;font-family:'Liberation Sans',sans-serif;font-weight:400;color:#111;transform:scaleX(0.9947);-webkit-text-stroke:0.2px #111;">Deckary</div>
<div class="t" style="left:1797.50px;top:1361.64px;font-size:20.65px;font-family:'Liberation Sans',sans-serif;font-weight:400;color:#111;transform:scaleX(0.6829);-webkit-text-stroke:0.2px #111;">1</div>
<div class="r" style="left:2062.6px;top:216.5px;width:700px;height:53.8px;background:#ececec;"></div>
<div class="t" style="left:2093.85px;top:228.49px;font-size:31.71px;font-family:'Liberation Sans',sans-serif;font-weight:400;color:#1c1c1c;transform:scaleX(0.9974);-webkit-text-stroke:0.9px #1c1c1c;">Deckary</div>
<svg class="s" style="left:2700px;top:227px" width="34" height="34" viewBox="0 0 34 34"><circle cx="16.9" cy="16" r="14" fill="#767676"/><path d="M11.6 10.7 L22.2 21.3 M22.2 10.7 L11.6 21.3" stroke="#fff" stroke-width="2.3" stroke-linecap="round"/></svg>
<div class="t" style="left:2126.31px;top:293.21px;font-size:27.78px;font-family:'Liberation Sans',sans-serif;font-weight:700;color:#7b7b7b;transform:scaleX(0.9535);">Elements</div>
<div class="t" style="left:2307.35px;top:293.21px;font-size:27.78px;font-family:'Liberation Sans',sans-serif;font-weight:700;color:#262626;transform:scaleX(0.9781);">Charts</div>
<div class="t" style="left:2456.66px;top:293.72px;font-size:27.78px;font-family:'Liberation Sans',sans-serif;font-weight:700;color:#7b7b7b;transform:scaleX(0.9480);">AI</div>
<div class="r" style="left:2284px;top:342px;width:132.8px;height:4px;background:#d65837;"></div>
<div class="r" style="left:2062.6px;top:346.3px;width:700px;height:1.4px;background:#d6d6d6;"></div>
<svg class="s" style="left:2655px;top:270px" width="107" height="75" viewBox="2655 270 107 75"><circle cx="2690.5" cy="307.7" r="30.5" fill="#efeeec" stroke="#dedede" stroke-width="1.3"/><rect x="2698.8" y="282" width="51.9" height="51.6" rx="10" fill="#717171"/><circle cx="2727.6" cy="296.6" r="3.3" fill="#fff"/><path d="M2720.3 306.4 C2722.5 305 2725 304.4 2726.9 305.2 L2723.3 318.6 C2722.7 321 2724.3 322.1 2726.4 320.9 L2730 318.5" fill="none" stroke="#fff" stroke-width="3.3" stroke-linecap="round" stroke-linejoin="round"/><g transform="translate(2690.8 307.9)" fill="none" stroke="#1a1a1a" stroke-width="2.1" stroke-linejoin="round"><path d="M8.00 0.00 L8.08 0.56 L8.31 1.17 L8.76 1.86 L10.17 2.92 L10.68 3.89 L10.76 4.79 L10.57 5.62 L10.16 6.35 L9.53 6.92 L8.71 7.31 L7.61 7.35 L5.99 6.65 L5.17 6.62 L4.53 6.71 L4.00 6.93 L3.55 7.28 L3.15 7.79 L2.77 8.51 L2.56 10.26 L1.97 11.19 L1.23 11.72 L0.42 11.97 L-0.42 11.97 L-1.23 11.72 L-1.97 11.19 L-2.56 10.26 L-2.77 8.51 L-3.15 7.79 L-3.55 7.28 L-4.00 6.93 L-4.53 6.71 L-5.17 6.62 L-5.99 6.65 L-7.61 7.35 L-8.71 7.31 L-9.53 6.92 L-10.16 6.35 L-10.57 5.62 L-10.76 4.79 L-10.68 3.89 L-10.17 2.92 L-8.76 1.86 L-8.31 1.17 L-8.08 0.56 L-8.00 0.00 L-8.08 -0.56 L-8.31 -1.17 L-8.76 -1.86 L-10.17 -2.92 L-10.68 -3.89 L-10.76 -4.79 L-10.57 -5.62 L-10.16 -6.35 L-9.53 -6.92 L-8.71 -7.31 L-7.61 -7.35 L-5.99 -6.65 L-5.17 -6.62 L-4.53 -6.71 L-4.00 -6.93 L-3.55 -7.28 L-3.15 -7.79 L-2.77 -8.51 L-2.56 -10.26 L-1.97 -11.19 L-1.23 -11.72 L-0.42 -11.97 L0.42 -11.97 L1.23 -11.72 L1.97 -11.19 L2.56 -10.26 L2.77 -8.51 L3.15 -7.79 L3.55 -7.28 L4.00 -6.93 L4.53 -6.71 L5.17 -6.62 L5.99 -6.65 L7.61 -7.35 L8.71 -7.31 L9.53 -6.92 L10.16 -6.35 L10.57 -5.62 L10.76 -4.79 L10.68 -3.89 L10.17 -2.92 L8.76 -1.86 L8.31 -1.17 L8.08 -0.56 L8.00 -0.00 Z"/><circle r="3.9"/></g></svg>
<div class="r" style="left:2101.9px;top:379.9px;width:620.1px;height:72.2px;background:#f5f5f3;border-radius:17px;"></div>
<div class="r" style="left:2546.4px;top:386.6px;width:83.1px;height:59.7px;background:#ffffff;border-radius:14px;box-shadow:0 1px 3px rgba(0,0,0,0.08);"></div>
<svg class="s" style="left:0;top:0" width="2762" height="1504" viewBox="0 0 2762 1504"><path d="M2137.3 401.5 V427.8 a1.6 1.6 0 0 0 1.6 1.6 H2164.5" fill="none" stroke="#7d7d7d" stroke-width="2.6" stroke-linecap="round" stroke-linejoin="round"/><path d="M2144.8 419 V423.8 M2152.7 405.3 V423.8 M2160.2 410.5 V423.8" fill="none" stroke="#7d7d7d" stroke-width="2.6" stroke-linecap="round" stroke-linejoin="round"/><circle cx="2230.7" cy="407.7" r="3.7" fill="none" stroke="#7d7d7d" stroke-width="2.6" stroke-linecap="round" stroke-linejoin="round"/><circle cx="2247.2" cy="424.5" r="3.9" fill="none" stroke="#7d7d7d" stroke-width="2.6" stroke-linecap="round" stroke-linejoin="round"/><path d="M2228.3 426.5 L2249.8 405.3" fill="none" stroke="#7d7d7d" stroke-width="2.6" stroke-linecap="round" stroke-linejoin="round"/><path d="M2314.4 401.8 V424 M2325 401.8 V414.8 M2335.5 401.8 V430.5" fill="none" stroke="#7d7d7d" stroke-width="2.6" stroke-linecap="round" stroke-linejoin="round"/><path d="M2399.5 401.5 V427.8 a1.6 1.6 0 0 0 1.6 1.6 H2427" fill="none" stroke="#7d7d7d" stroke-width="2.6" stroke-linecap="round" stroke-linejoin="round"/><circle cx="2406.1" cy="408.9" r="1.9" fill="#7d7d7d"/><circle cx="2412" cy="414.9" r="1.9" fill="#7d7d7d"/><circle cx="2406.1" cy="422.8" r="1.9" fill="#7d7d7d"/><circle cx="2422.6" cy="405.9" r="1.9" fill="#7d7d7d"/><circle cx="2421" cy="419.9" r="1.9" fill="#7d7d7d"/><path d="M2487.4 401.8 V427.8 a1.6 1.6 0 0 0 1.6 1.6 H2515.3" fill="none" stroke="#7d7d7d" stroke-width="2.6" stroke-linecap="round" stroke-linejoin="round"/><path d="M2493 417.3 L2497.6 412.9 L2503.6 418.8 L2511.4 411.6" fill="none" stroke="#7d7d7d" stroke-width="2.6" stroke-linecap="round" stroke-linejoin="round"/><rect x="2573.9" y="403.1" width="9.5" height="9.6" rx="2.2" fill="none" stroke="#1f1f1f" stroke-width="3" stroke-linejoin="round"/><rect x="2591.7" y="403.1" width="9.5" height="9.6" rx="2.2" fill="none" stroke="#1f1f1f" stroke-width="3" stroke-linejoin="round"/><rect x="2573.9" y="419.3" width="9.5" height="9.6" rx="2.2" fill="none" stroke="#1f1f1f" stroke-width="3" stroke-linejoin="round"/><rect x="2591.7" y="419.3" width="9.5" height="9.6" rx="2.2" fill="none" stroke="#1f1f1f" stroke-width="3" stroke-linejoin="round"/><path d="M2665.2 405.6 H2684.7 M2662.1 415.8 H2678.7 M2674.4 426.4 H2687.7" fill="none" stroke="#7d7d7d" stroke-width="2.6" stroke-linecap="round" stroke-linejoin="round"/><path d="M2651.5 554.5 L2652.8 548.2 L2669.6 531.4 a2.6 2.6 0 0 1 3.7 0 L2674.4 532.5 a2.6 2.6 0 0 1 0 3.7 L2657.6 553 Z M2666.6 534.4 L2671.4 539.2" fill="none" stroke="#7a7a7a" stroke-width="2.1" stroke-linejoin="round"/><path d="M2116.90 664.80 C2118.50 664.80 2118.90 668.00 2119.20 670.50 C2119.50 673.00 2120.40 673.60 2122.40 673.80 C2124.90 674.00 2128.20 674.20 2128.20 676.00 C2128.20 677.80 2124.90 678.00 2122.40 678.20 C2120.40 678.40 2119.50 679.00 2119.20 681.50 C2118.90 684.00 2118.50 687.20 2116.90 687.20 C2115.30 687.20 2114.90 684.00 2114.60 681.50 C2114.30 679.00 2113.40 678.40 2111.40 678.20 C2108.90 678.00 2105.60 677.80 2105.60 676.00 C2105.60 674.20 2108.90 674.00 2111.40 673.80 C2113.40 673.60 2114.30 673.00 2114.60 670.50 C2114.90 668.00 2115.30 664.80 2116.90 664.80 Z" fill="none" stroke="#d65837" stroke-width="2.6" stroke-linejoin="round"/><path d="M2126.2 664.2 V669.2 M2123.7 666.7 H2128.7" fill="none" stroke="#d65837" stroke-width="2.6" stroke-linecap="round"/><circle cx="2107.5" cy="685.2" r="2.2" fill="none" stroke="#d65837" stroke-width="1.9"/><path d="M2708.3 670.4 L2721.4 676.9 L2708.3 683.4 Z" fill="#858585"/><path d="M2708.3 743.9 L2721.4 750.4 L2708.3 756.9 Z" fill="#858585"/><path d="M2708.3 817.9 L2721.4 824.4 L2708.3 830.9 Z" fill="#858585"/><path d="M2708.3 891.9 L2721.4 898.4 L2708.3 904.9 Z" fill="#858585"/><path d="M2708.3 965.8 L2721.4 972.3 L2708.3 978.8 Z" fill="#858585"/><path d="M2707.7 1040.5 H2721.8 L2714.75 1053.8 Z" fill="#858585"/><path d="M2686.8 1221.5 L2693.2 1228.2 L2699.6 1221.5" fill="none" stroke="#333" stroke-width="1.8" stroke-linecap="round" stroke-linejoin="round"/></svg>
<div class="r" style="left:2103px;top:484.3px;width:619.7px;height:121.4px;background:#f6f6f4;border-radius:17px;"></div>
<div class="t" style="left:2131.22px;top:514.79px;font-size:27.24px;font-family:'Liberation Sans',sans-serif;font-weight:700;color:#1f1f1f;transform:scaleX(0.9399);">3 rows</div>
<div class="t" style="left:2130.75px;top:551.55px;font-size:24.41px;font-family:'Liberation Sans',sans-serif;font-weight:400;color:#767676;-webkit-text-stroke:0.25px #767676;">manually entered</div>
<div class="r" style="left:2631.3px;top:513.8px;width:63.5px;height:61.9px;background:#ffffff;border:1.4px solid #dadada;border-radius:13px;box-sizing:border-box;"></div>
<svg class="s" style="left:2640px;top:522px" width="46" height="44" viewBox="2640 522 46 44"><path d="M2651.5 554.5 L2652.8 548.2 L2669.6 531.4 a2.6 2.6 0 0 1 3.7 0 L2674.4 532.5 a2.6 2.6 0 0 1 0 3.7 L2657.6 553 Z M2666.6 534.4 L2671.4 539.2" fill="none" stroke="#7a7a7a" stroke-width="2.1" stroke-linejoin="round"/></svg>
<div class="r" style="left:2103px;top:638.3px;width:619.7px;height:1.4px;background:#d9d9d7;"></div>
<div class="r" style="left:2103px;top:712.4px;width:619.7px;height:1.4px;background:#d9d9d7;"></div>
<div class="r" style="left:2103px;top:786.5px;width:619.7px;height:1.4px;background:#d9d9d7;"></div>
<div class="r" style="left:2103px;top:860.3px;width:619.7px;height:1.4px;background:#d9d9d7;"></div>
<div class="r" style="left:2103px;top:934.1999999999999px;width:619.7px;height:1.4px;background:#d9d9d7;"></div>
<div class="r" style="left:2103px;top:1008.0999999999999px;width:619.7px;height:1.4px;background:#d9d9d7;"></div>
<div class="t" style="left:2143.21px;top:663.68px;font-size:26.47px;font-family:'Liberation Sans',sans-serif;font-weight:700;color:#d4552f;transform:scaleX(0.9846);">AI Assistant</div>
<div class="t" style="left:2102.64px;top:736.55px;font-size:27.64px;font-family:'Liberation Sans',sans-serif;font-weight:700;color:#262626;transform:scaleX(0.9407);">Colors</div>
<div class="t" style="left:2102.96px;top:811.20px;font-size:27.20px;font-family:'Liberation Sans',sans-serif;font-weight:700;color:#7b7b7b;transform:scaleX(0.9456);">Axes</div>
<div class="t" style="left:2101.64px;top:885.30px;font-size:27.20px;font-family:'Liberation Sans',sans-serif;font-weight:700;color:#262626;transform:scaleX(0.9817);">Data Labels</div>
<div class="t" style="left:2101.46px;top:960.01px;font-size:26.62px;font-family:'Liberation Sans',sans-serif;font-weight:700;color:#262626;transform:scaleX(0.9914);">Reference Line</div>
<div class="t" style="left:2102.56px;top:1033.30px;font-size:26.18px;font-family:'Liberation Sans',sans-serif;font-weight:700;color:#262626;transform:scaleX(1.0066);">Legend</div>
<div class="t" style="left:2103.43px;top:1095.85px;font-size:26.47px;font-family:'Liberation Sans',sans-serif;font-weight:400;color:#262626;-webkit-text-stroke:0.4px #262626;">Show Legend</div>
<div class="r" style="left:2643.6px;top:1086.1px;width:79.1px;height:43.6px;background:#d65837;border-radius:22px;"></div>
<div class="r" style="left:2682.8px;top:1090.1px;width:36.2px;height:36.2px;border-radius:50%;background:#fff;box-shadow:0 1px 2px rgba(0,0,0,0.12);"></div>
<div class="t" style="left:2102.83px;top:1155.43px;font-size:23.71px;font-family:'Liberation Sans',sans-serif;font-weight:700;color:#7b7b7b;transform:scaleX(0.9420);">Position</div>
<div class="r" style="left:2103.3px;top:1192.5px;width:619.4px;height:66.8px;background:#f6f6f4;border:1.4px solid #d8d8d6;border-radius:13px;box-sizing:border-box;"></div>
<div class="t" style="left:2128.65px;top:1213.94px;font-size:26.33px;font-family:'Liberation Sans',sans-serif;font-weight:400;color:#1f1f1f;transform:scaleX(1.0253);-webkit-text-stroke:0.4px #1f1f1f;">Right</div>
<svg class="s" style="left:2680px;top:1214px" width="26" height="22" viewBox="2680 1214 26 22"><path d="M2686.8 1221.5 L2693.2 1228.2 L2699.6 1221.5" fill="none" stroke="#555" stroke-width="2" stroke-linecap="round" stroke-linejoin="round"/></svg>
</body></html>
